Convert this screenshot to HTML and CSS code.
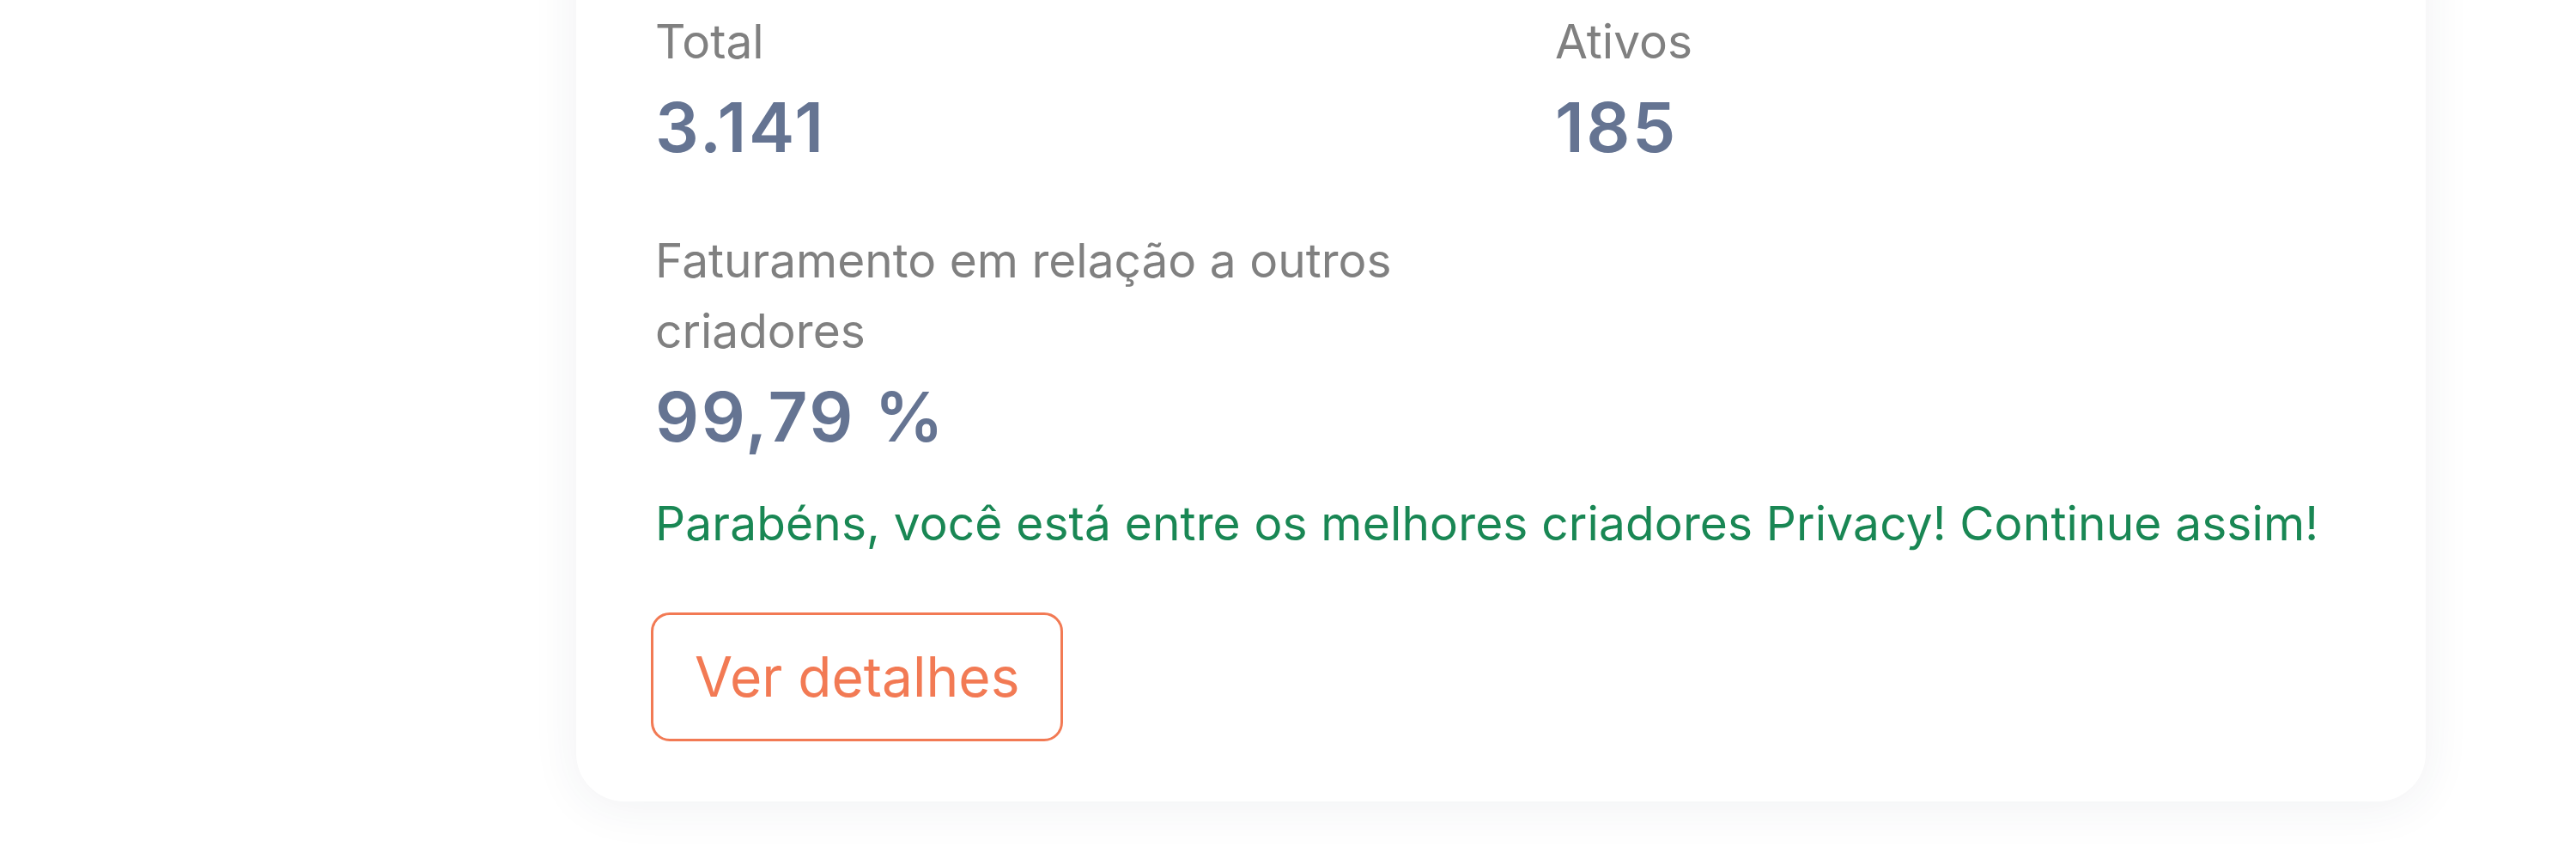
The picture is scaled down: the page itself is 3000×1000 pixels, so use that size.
FILE: index.html
```html
<!DOCTYPE html>
<html lang="pt-BR">
<head>
<meta charset="utf-8">
<title>Faturamento</title>
<link rel="stylesheet" href="styles.css">
</head>
<body>
<main class="page">
  <section class="card">
    <div class="stats">
      <div class="stat">
        <div class="stat-label">Total</div>
        <div class="stat-value">3.141</div>
      </div>
      <div class="stat">
        <div class="stat-label">Ativos</div>
        <div class="stat-value">185</div>
      </div>
      <div class="stat">
        <div class="stat-label">Faturamento em relação a outros criadores</div>
        <div class="stat-value">99,79 %</div>
      </div>
    </div>
    <p class="message">Parabéns, você está entre os melhores criadores Privacy! Continue assim!</p>
    <button class="btn-outline" type="button">Ver detalhes</button>
  </section>
</main>
</body>
</html>
```

FILE: styles.css
```css
html, body {
  margin: 0;
  padding: 0;
  background: #ffffff;
}

body {
  font-family: "Inter", "Noto Sans", "Liberation Sans", sans-serif;
  overflow: hidden;
  height: 1000px;
}

.page {
  padding-left: 671px;
}

.card {
  box-sizing: border-box;
  width: 2154px;
  margin-top: -100px;
  padding: 107px 92px 70px 92px;
  background: #ffffff;
  border-radius: 56px;
  box-shadow: 0 6px 56px rgba(40, 52, 90, 0.07);
}

.stats {
  display: grid;
  grid-template-columns: 1fr 1fr;
  column-gap: 126px;
  row-gap: 66px;
}

.stat-label {
  font-size: 55px;
  line-height: 1.5;
  color: #808080;
  margin-bottom: 10px;
}

.stat-value {
  font-size: 80px;
  line-height: 1.2;
  font-weight: 600;
  letter-spacing: 2.5px;
  color: #657492;
}

.message {
  margin: 35px 0 0 0;
  font-size: 55px;
  line-height: 1.5;
  letter-spacing: 0.15px;
  color: #198754;
}

.btn-outline {
  display: block;
  margin: 63px 0 0 -5px;
  padding: 24px 48px;
  font-family: inherit;
  font-size: 64px;
  line-height: 1.5;
  color: #f27a54;
  background: #ffffff;
  border: 3px solid #f27a54;
  border-radius: 22px;
  cursor: pointer;
}
```
